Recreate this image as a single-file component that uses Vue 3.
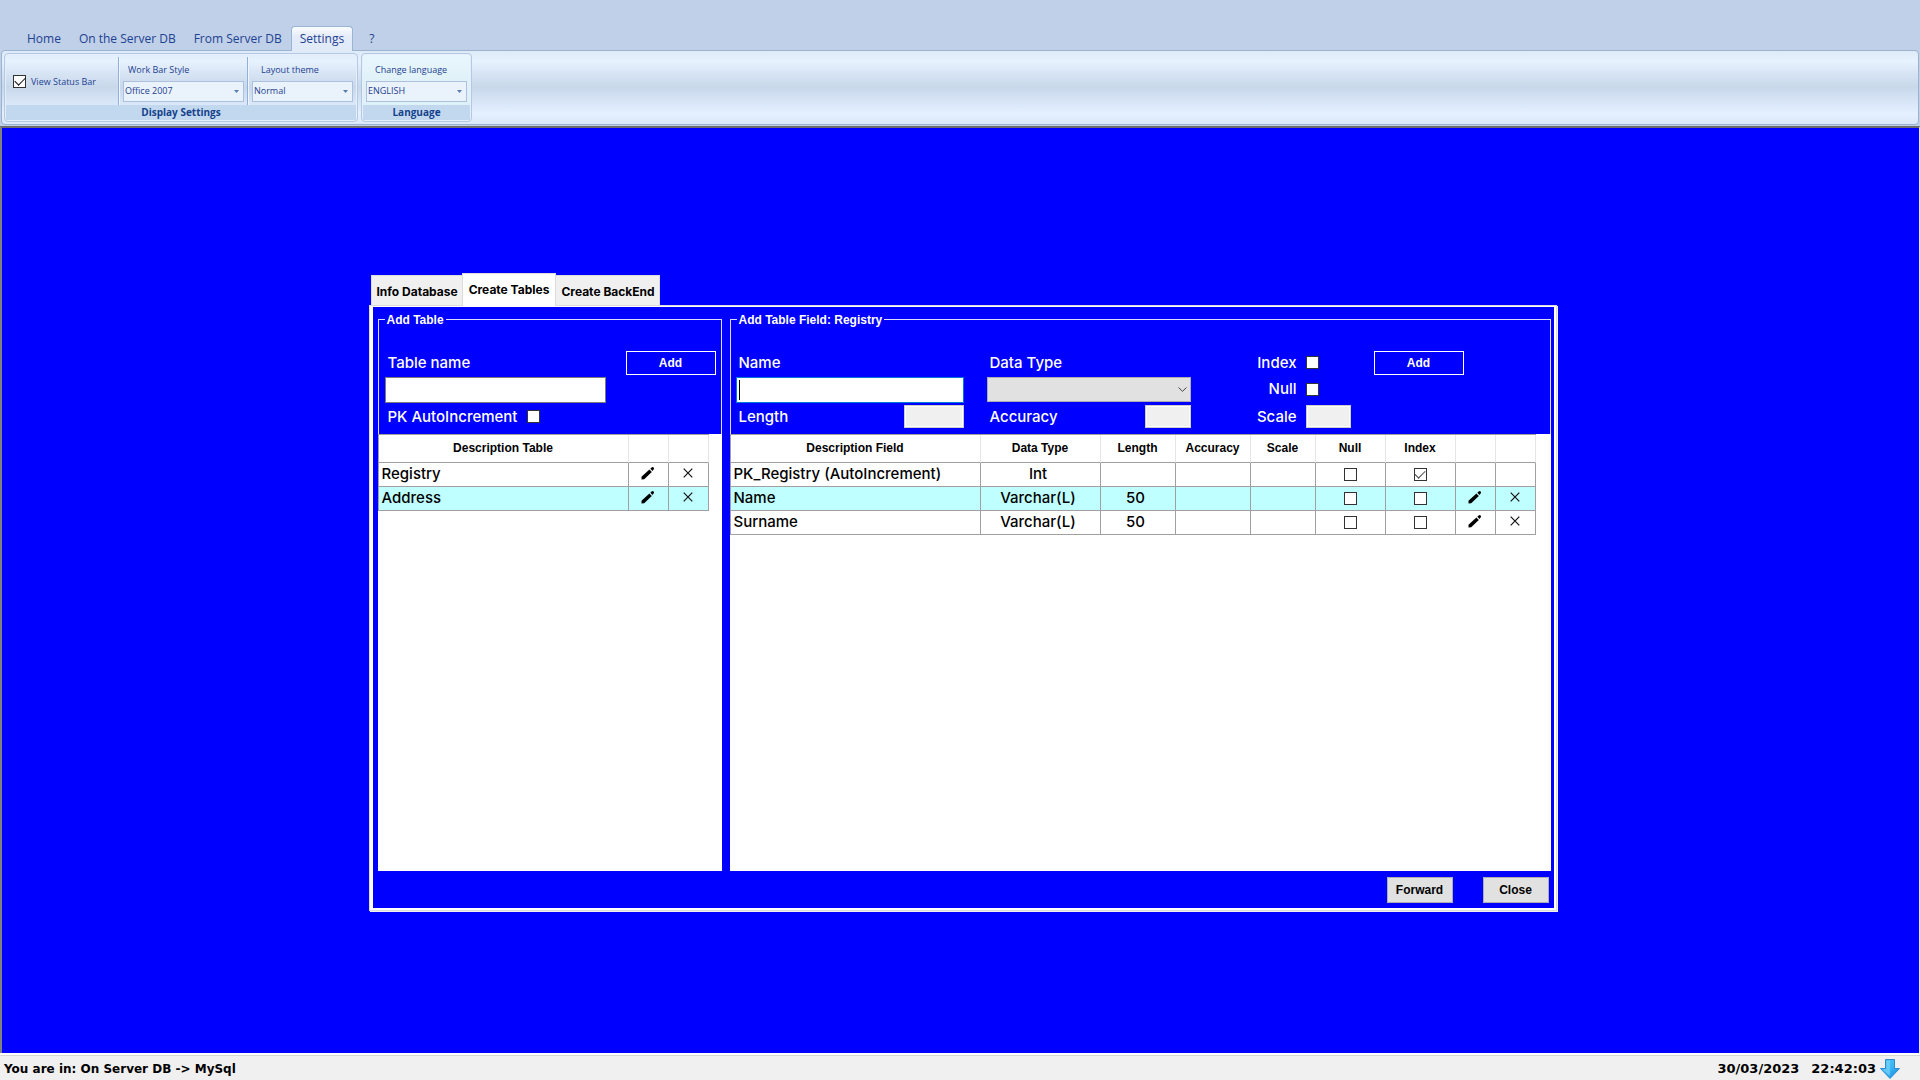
<template>
    <div class="app">
        <header class="ribbon">
            <nav class="ribbon-tabs" role="tablist" aria-label="Ribbon">
                <button v-for="tab in ribbonTabs" :key="tab" role="tab" :class="['ribbon-tab', { active: activeRibbon === tab }]"
                    :aria-selected="activeRibbon === tab" @click="activeRibbon = tab">
                    {{ tab }}
                </button>
            </nav>

            <div class="ribbon-body">
                <section class="ribbon-group display-group">
                    <div class="ribbon-items">
                        <label class="status-toggle">
                            <input type="checkbox" class="check" v-model="showStatus" />
                            View Status Bar
                        </label>
                        <div class="ribbon-field">
                            <label for="bar-style">Work Bar Style</label>
                            <div class="combo wide">
                                <select id="bar-style" v-model="barStyle">
                                    <option>Office 2007</option>
                                    <option>Office 2003</option>
                                </select>
                                <svg viewBox="0 0 5 3" aria-hidden="true"><path d="M0 0h5L2.5 3z" /></svg>
                            </div>
                        </div>
                        <div class="ribbon-field">
                            <label for="theme" class="indent">Layout theme</label>
                            <div class="combo">
                                <select id="theme" v-model="theme">
                                    <option>Normal</option>
                                    <option>Dark</option>
                                </select>
                                <svg viewBox="0 0 5 3" aria-hidden="true"><path d="M0 0h5L2.5 3z" /></svg>
                            </div>
                        </div>
                    </div>
                    <h2>Display Settings</h2>
                </section>

                <section class="ribbon-group language-group">
                    <div class="ribbon-items">
                        <div class="ribbon-field">
                            <label for="language" class="indent">Change language</label>
                            <div class="combo">
                                <select id="language" v-model="language">
                                    <option>ENGLISH</option>
                                    <option>ITALIANO</option>
                                </select>
                                <svg viewBox="0 0 5 3" aria-hidden="true"><path d="M0 0h5L2.5 3z" /></svg>
                            </div>
                        </div>
                    </div>
                    <h2>Language</h2>
                </section>
            </div>
        </header>

        <main class="workspace">
            <div class="wizard">
                <div class="page-tabs" role="tablist" aria-label="Wizard steps">
                    <button v-for="tab in pageTabs" :key="tab" role="tab" :class="['page-tab', { active: activePage === tab }]"
                        :aria-selected="activePage === tab" @click="activePage = tab">
                        {{ tab }}
                    </button>
                </div>

                <div class="frame">
                    <div class="page">
                        <div class="groups">
                            <fieldset class="group tables-group">
                                <legend>Add Table</legend>
                                <form class="table-form" @submit.prevent="addTable">
                                    <div class="line spread">
                                        <label for="table-name">Table name</label>
                                        <button class="add">Add</button>
                                    </div>
                                    <input id="table-name" class="text-box table-name" v-model="tableName" />
                                    <div class="line short pk-line">
                                        <label for="pk-auto">PK AutoIncrement</label>
                                        <input id="pk-auto" type="checkbox" class="check" v-model="pkAuto" />
                                    </div>
                                </form>
                                <div class="data">
                                    <table>
                                        <colgroup>
                                            <col class="w250" />
                                            <col class="w40" />
                                            <col class="w40" />
                                        </colgroup>
                                        <thead>
                                            <tr>
                                                <th>Description Table</th>
                                                <th></th>
                                                <th></th>
                                            </tr>
                                        </thead>
                                        <tbody>
                                            <tr v-for="(name, i) in tables" :key="name">
                                                <td class="left">{{ name }}</td>
                                                <td>
                                                    <button class="icon" :aria-label="`Edit ${name}`">
                                                        <svg width="14" height="14" viewBox="0 0 14 14"><path d="M0.5 13.5V10.8L8.4 3.6L10.8 6L3.2 13.2Z" /><path d="M9.3 2.7L11 1.2Q11.8 .7 12.6 1.4Q13.4 2.2 12.9 3L11.6 5Z" /></svg>
                                                    </button>
                                                </td>
                                                <td>
                                                    <button class="icon" :aria-label="`Delete ${name}`" @click="tables.splice(i, 1)">
                                                        <svg width="10" height="10" viewBox="0 0 10 10"><path class="cross" d="M.7 .7L9.3 9.3M9.3 .7L.7 9.3" /></svg>
                                                    </button>
                                                </td>
                                            </tr>
                                        </tbody>
                                    </table>
                                </div>
                            </fieldset>

                            <fieldset class="group fields-group">
                                <legend>Add Table Field: Registry</legend>
                                <form class="field-form" @submit.prevent="addField">
                                    <div class="column">
                                        <div class="line"><label for="field-name">Name</label></div>
                                        <input id="field-name" ref="nameBox" :class="['text-box', { empty: !fieldName }]" v-model="fieldName" />
                                        <div class="line short spread">
                                            <label for="length">Length</label>
                                            <input id="length" class="off-box w60" disabled />
                                        </div>
                                    </div>
                                    <div class="column">
                                        <div class="line"><label for="data-type">Data Type</label></div>
                                        <div class="type-box">
                                            <select id="data-type" v-model="dataType">
                                                <option value=""></option>
                                                <option>Int</option>
                                                <option>Varchar(L)</option>
                                            </select>
                                            <svg width="9" height="5" viewBox="0 0 9 5" aria-hidden="true"><path d="M.5 .5L4.5 4.3L8.5 .5" /></svg>
                                        </div>
                                        <div class="line short spread">
                                            <label for="accuracy">Accuracy</label>
                                            <input id="accuracy" class="off-box w46" disabled />
                                        </div>
                                    </div>
                                    <div class="column">
                                        <div class="line flag">
                                            <label for="is-index">Index</label>
                                            <input id="is-index" type="checkbox" class="check" v-model="isIndex" />
                                        </div>
                                        <div class="line flag tall">
                                            <label for="is-null">Null</label>
                                            <input id="is-null" type="checkbox" class="check" v-model="isNull" />
                                        </div>
                                        <div class="line short flag">
                                            <label for="scale">Scale</label>
                                            <input id="scale" class="off-box" disabled />
                                        </div>
                                    </div>
                                    <div class="column">
                                        <button class="add">Add</button>
                                    </div>
                                </form>
                                <div class="data">
                                    <table>
                                        <colgroup>
                                            <col class="w250" />
                                            <col class="w120" />
                                            <col class="w75" />
                                            <col class="w75" />
                                            <col class="w65" />
                                            <col class="w70" />
                                            <col class="w70" />
                                            <col class="w40" />
                                            <col class="w40" />
                                        </colgroup>
                                        <thead>
                                            <tr>
                                                <th v-for="(head, i) in fieldHeads" :key="i">{{ head }}</th>
                                            </tr>
                                        </thead>
                                        <tbody>
                                            <tr v-for="(f, i) in fields" :key="f.name">
                                                <td class="left">{{ f.name }}</td>
                                                <td class="value">{{ f.type }}</td>
                                                <td class="value">{{ f.length }}</td>
                                                <td></td>
                                                <td></td>
                                                <td><input type="checkbox" class="check" v-model="f.nullable" :aria-label="`${f.name} null`" /></td>
                                                <td><input type="checkbox" :class="['check', { faded: f.pk }]" v-model="f.index" :aria-label="`${f.name} index`" /></td>
                                                <td>
                                                    <button v-if="!f.pk" class="icon" :aria-label="`Edit ${f.name}`">
                                                        <svg width="14" height="14" viewBox="0 0 14 14"><path d="M0.5 13.5V10.8L8.4 3.6L10.8 6L3.2 13.2Z" /><path d="M9.3 2.7L11 1.2Q11.8 .7 12.6 1.4Q13.4 2.2 12.9 3L11.6 5Z" /></svg>
                                                    </button>
                                                </td>
                                                <td>
                                                    <button v-if="!f.pk" class="icon" :aria-label="`Delete ${f.name}`" @click="fields.splice(i, 1)">
                                                        <svg width="10" height="10" viewBox="0 0 10 10"><path class="cross" d="M.7 .7L9.3 9.3M9.3 .7L.7 9.3" /></svg>
                                                    </button>
                                                </td>
                                            </tr>
                                        </tbody>
                                    </table>
                                </div>
                            </fieldset>
                        </div>

                        <footer class="page-footer">
                            <button>Forward</button>
                            <button>Close</button>
                        </footer>
                    </div>
                </div>
            </div>
        </main>

        <footer v-if="showStatus" class="status-bar">
            <span>You are in: On Server DB -&gt; MySql</span>
            <span class="clock">
                <span>30/03/2023</span>
                <span>22:42:03</span>
                <svg width="20" height="20" viewBox="0 0 20 20" aria-hidden="true">
                    <defs>
                        <linearGradient id="arrow-fill" x1="0" y1="0" x2="1" y2="1">
                            <stop offset="0" stop-color="#5cc4f4" />
                            <stop offset="0.5" stop-color="#38b6f4" />
                            <stop offset="1" stop-color="#1380dc" />
                        </linearGradient>
                    </defs>
                    <path d="M5.5 .5H14.5V9.5H19.5L10 19.5L.5 9.5H5.5Z" fill="url(#arrow-fill)" stroke="#2a8bd0" />
                    <path d="M6.5 1.5H10V17L2.6 10.5H6.5Z" fill="#8fdcfa" opacity="0.5" />
                </svg>
            </span>
        </footer>
    </div>
</template>

<script setup>
import { ref, onMounted } from 'vue';

const ribbonTabs = ['Home', 'On the Server DB', 'From Server DB', 'Settings', '?'];
const pageTabs = ['Info Database', 'Create Tables', 'Create BackEnd'];
const fieldHeads = ['Description Field', 'Data Type', 'Length', 'Accuracy', 'Scale', 'Null', 'Index', '', ''];

const activeRibbon = ref('Settings');
const activePage = ref('Create Tables');

// ribbon settings
const showStatus = ref(true);
const barStyle = ref('Office 2007');
const theme = ref('Normal');
const language = ref('ENGLISH');

// tables
const tables = ref(['Registry', 'Address']);
const tableName = ref('');
const pkAuto = ref(false);

function addTable() {
    const name = tableName.value.trim();
    if (!name) return;
    tables.value.push(name);
    tableName.value = '';
}

// fields of the selected table
const fields = ref([
    { name: 'PK_Registry (AutoIncrement)', type: 'Int', length: '', nullable: false, index: true, pk: true },
    { name: 'Name', type: 'Varchar(L)', length: '50', nullable: false, index: false },
    { name: 'Surname', type: 'Varchar(L)', length: '50', nullable: false, index: false },
]);
const fieldName = ref('');
const dataType = ref('');
const isIndex = ref(false);
const isNull = ref(false);
const nameBox = ref(null);

function addField() {
    const name = fieldName.value.trim();
    if (!name) return;
    fields.value.push({ name, type: dataType.value, length: '', nullable: isNull.value, index: isIndex.value });
    fieldName.value = '';
}

onMounted(() => {
    nameBox.value.focus();
});
</script>

<style>
body {
    margin: 0;
}
</style>

<style scoped>
.app {
    display: flex;
    flex-direction: column;
    min-height: 100vh;
    background: #bfd0e8;
    font-family: Inter, 'Liberation Sans', sans-serif;
    color: #000;
}

.app * {
    box-sizing: border-box;
}

button,
input,
select {
    font: inherit;
    color: inherit;
    margin: 0;
}

button {
    cursor: pointer;
}

/* Ribbon */
.ribbon {
    padding: 26px 1px 1px;
    font-family: 'Open Sans', 'Noto Sans', sans-serif;
    color: #1e4191;
}

.ribbon-tabs {
    display: flex;
    padding-left: 17px;
}

.ribbon-tab {
    height: 24px;
    padding: 0 8px;
    border: 1px solid transparent;
    border-bottom: 0;
    background: none;
    font-size: 12px;
    white-space: nowrap;
}

.ribbon-tab.active {
    height: 25px;
    padding-bottom: 1px;
    margin: 0 7px -1px 0;
    position: relative;
    border-color: #9ab4d6;
    border-radius: 4px 4px 0 0;
    background: linear-gradient(#fafcff, #e4ecf9 40%, #e0eaf8);
}

.ribbon-body {
    display: flex;
    gap: 3px;
    padding: 2px;
    border: 1px solid #9cb3d0;
    border-radius: 4px;
    background: linear-gradient(#deeaf7, #e7f2ff 14%, #d6e3f3 32%, #c8d8ea 50%, #d6e4f6 68%, #e5f0ff 86%, #dbe8f8);
}

.ribbon-group {
    display: flex;
    flex-direction: column;
    border: 1px solid #b3c8e3;
    border-radius: 4px;
    overflow: hidden;
    box-shadow: inset 0 0 0 1px #e6effa;
}

.ribbon-items {
    display: flex;
    height: 51px;
    padding: 3px 4px 0;
}

.language-group {
    background: linear-gradient(#e8f7fd, #def0f6 50%, #e0f2fa);
}

.ribbon-group h2 {
    margin: 0 1px 1px;
    height: 15px;
    background: #c2d8ef;
    font-size: 10px;
    line-height: 14px;
    text-align: center;
    color: #15428b;
}

.status-toggle {
    display: flex;
    align-items: center;
    gap: 5px;
    width: 109px;
    padding-left: 4px;
    font-size: 9px;
}

.ribbon-field {
    display: flex;
    flex-direction: column;
    gap: 2px;
    padding: 4px 3px 0 4px;
    font-size: 9px;
}

.ribbon-field > label {
    padding-left: 5px;
    line-height: 18px;
}

.ribbon-field > label.indent {
    padding-left: 9px;
}

.display-group .ribbon-field {
    border-left: 1px solid #8fb0dc;
    box-shadow: inset 1px 0 #f0f6ff;
}

.display-group .ribbon-field:last-child {
    padding-right: 0;
}

.language-group .ribbon-field {
    padding: 4px 0 0;
}

.combo {
    position: relative;
    width: 101px;
}

.combo.wide {
    width: 121px;
}

.combo select {
    display: block;
    width: 100%;
    height: 21px;
    padding: 0 12px 2px 1px;
    border: 1px solid #abc1de;
    border-radius: 0;
    background: #eaf2fb;
    appearance: none;
}

.combo svg {
    position: absolute;
    right: 5px;
    top: 9px;
    width: 5px;
    height: 3px;
    fill: #567db1;
    pointer-events: none;
}

/* Check boxes */
.check {
    appearance: none;
    flex: none;
    display: inline-grid;
    place-items: center;
    width: 13px;
    height: 13px;
    border: 1px solid #333;
    background: #fff;
}

.check:checked::before {
    content: '';
    width: 9px;
    height: 5px;
    margin-top: -3px;
    border-left: 1px solid #111;
    border-bottom: 1px solid #111;
    transform: rotate(-45deg);
}

.check.faded:checked::before {
    border-color: #444;
}

/* Workspace */
.workspace {
    flex: 1;
    display: flex;
    justify-content: center;
    align-items: center;
    padding: 2px 0 0 4px;
    border: 1px solid #808080;
    border-top: 2px solid #6c6c6c;
    border-left-width: 2px;
    border-right-color: #dde6f2;
    border-bottom: 0;
    background: #00f;
}

.wizard {
    width: 62%;
    min-width: 1188px;
}

.page-tabs {
    display: flex;
    align-items: flex-end;
    padding-left: 2px;
    font-size: 12px;
    font-weight: 700;
}

.page-tab {
    height: 30px;
    padding: 2px 4px 0 5px;
    border: 1px solid #dcdcdc;
    border-bottom: 0;
    background: #f0f0f0;
    white-space: nowrap;
}

.page-tab.active {
    height: 33px;
    padding: 0 6px;
    margin: 0 -1px -1px;
    position: relative;
    background: #fff;
}

.frame {
    padding: 1px 2px 2px 3px;
    border: 1px solid #dcdcdc;
    background: #fff;
    box-shadow: 1px 1px #f0f0f0;
}

.page {
    padding: 6px 3px 0 5px;
    background: #00f;
}

.groups {
    display: flex;
    gap: 8px;
}

.group {
    display: flex;
    flex-direction: column;
    min-width: 0;
    margin: 0;
    padding: 0;
    border: 1px solid #dcdcff;
    border-bottom: 0;
    color: #fff;
    font-size: 15px;
    font-weight: 500;
}

.tables-group {
    flex: 0 0 344px;
}

.fields-group {
    flex: 1;
}

.group legend {
    margin-left: 6px;
    padding: 0 2px;
    font-family: 'Liberation Sans', Arial, sans-serif;
    font-size: 12px;
    font-weight: 700;
    line-height: 14px;
}

.table-form,
.column {
    display: flex;
    flex-direction: column;
    gap: 2px;
}

.table-form {
    padding: 24px 5px 6px 6px;
}

.field-form {
    display: grid;
    grid-template-columns: 228px 204px 137px 90px;
    column-gap: 23px;
    padding: 24px 0 6px 5px;
}

.line {
    display: flex;
    align-items: center;
    height: 24px;
    padding-left: 3px;
}

.line.short {
    height: 23px;
}

.line.tall {
    height: 26px;
}

.line.tall label {
    padding-bottom: 2px;
}

.spread {
    justify-content: space-between;
}

.pk-line {
    gap: 10px;
}

.line.flag {
    display: grid;
    grid-template-columns: 1fr 45px;
    column-gap: 9px;
    padding-left: 0;
    text-align: right;
}

.text-box {
    width: 100%;
    height: 26px;
    padding: 0 2px;
    border: 1px solid #7a7a7a;
    background: #fff;
    color: #000;
}

.text-box.table-name {
    width: 67%;
}

.text-box:focus {
    border-color: #0078d7;
    outline: none;
}

/* steady caret while the focused box is empty */
.text-box.empty:focus {
    background: linear-gradient(#000, #000) 2px center / 1px 20px no-repeat #fff;
    caret-color: transparent;
}

.off-box {
    width: 45px;
    height: 23px;
    border: 1px solid #ccc;
    background: #f0f0f0;
    box-shadow: inset 0 0 0 1px #fff;
}

.off-box.w60 {
    width: 60px;
}

.off-box.w46 {
    width: 46px;
}

.type-box {
    position: relative;
    height: 26px;
}

.type-box select {
    display: block;
    width: 100%;
    height: 25px;
    padding: 0 20px 0 4px;
    border: 1px solid #adadad;
    border-radius: 0;
    background: #e1e1e1;
    color: #000;
    appearance: none;
}

.type-box svg {
    position: absolute;
    right: 4px;
    top: 10px;
    fill: none;
    stroke: #444;
    pointer-events: none;
}

.add {
    width: 90px;
    height: 24px;
    padding: 0;
    border: 1px solid #fff;
    background: #00f;
    font-family: 'Liberation Sans', Arial, sans-serif;
    font-size: 12px;
    font-weight: 700;
}

/* Data grids */
.data {
    flex: 1;
    min-height: 437px;
    margin: 0 -1px;
    background: #fff;
    color: #000;
}

table {
    width: min-content;
    table-layout: fixed;
    border-collapse: separate;
    border-spacing: 0;
    border-top: 1px solid #a0a0a0;
    border-left: 1px solid #a0a0a0;
}

th {
    height: 28px;
    padding: 0;
    border-right: 1px solid #e5e5e5;
    border-bottom: 1px solid #a0a0a0;
    font-family: 'Liberation Sans', Arial, sans-serif;
    font-size: 12px;
    font-weight: 700;
}

td {
    height: 24px;
    padding: 0;
    border-right: 1px solid #a0a0a0;
    border-bottom: 1px solid #a0a0a0;
    line-height: 20px;
    text-align: center;
}

td .check {
    display: grid;
    margin: 0 auto;
}

td.value {
    padding-right: 4px;
}

td.left {
    padding-left: 3px;
    text-align: left;
    white-space: nowrap;
}

tbody tr:nth-child(even) {
    background: #c0ffff;
}

.w250 {
    width: 250px;
}

.w120 {
    width: 120px;
}

.w75 {
    width: 75px;
}

.w70 {
    width: 70px;
}

.w65 {
    width: 65px;
}

.w40 {
    width: 40px;
}

.icon {
    display: grid;
    place-items: center;
    width: 100%;
    height: 20px;
    padding: 0 0 2px;
    border: 0;
    background: none;
}

.cross {
    fill: none;
    stroke: #111;
    stroke-width: 1.2;
}

.page-footer {
    display: flex;
    justify-content: flex-end;
    gap: 30px;
    padding: 6px 2px 5px;
}

.page-footer button {
    width: 66px;
    height: 26px;
    padding: 0;
    border: 1px solid #adadad;
    background: #e1e1e1;
    font-family: 'Liberation Sans', Arial, sans-serif;
    font-size: 12px;
    font-weight: 700;
}

/* Status bar */
.status-bar {
    display: flex;
    justify-content: space-between;
    align-items: center;
    height: 27px;
    padding: 2px 20px 0 4px;
    border-top: 2px solid #fff;
    background: #f0f0f0;
    box-shadow: inset 0 1px #d7d7d7;
    font-family: 'DejaVu Sans', Verdana, sans-serif;
    font-size: 12px;
    font-weight: 700;
}

.clock {
    display: flex;
    align-items: center;
    gap: 12px;
    font-size: 13px;
}

.clock svg {
    margin-left: -8px;
}
</style>
